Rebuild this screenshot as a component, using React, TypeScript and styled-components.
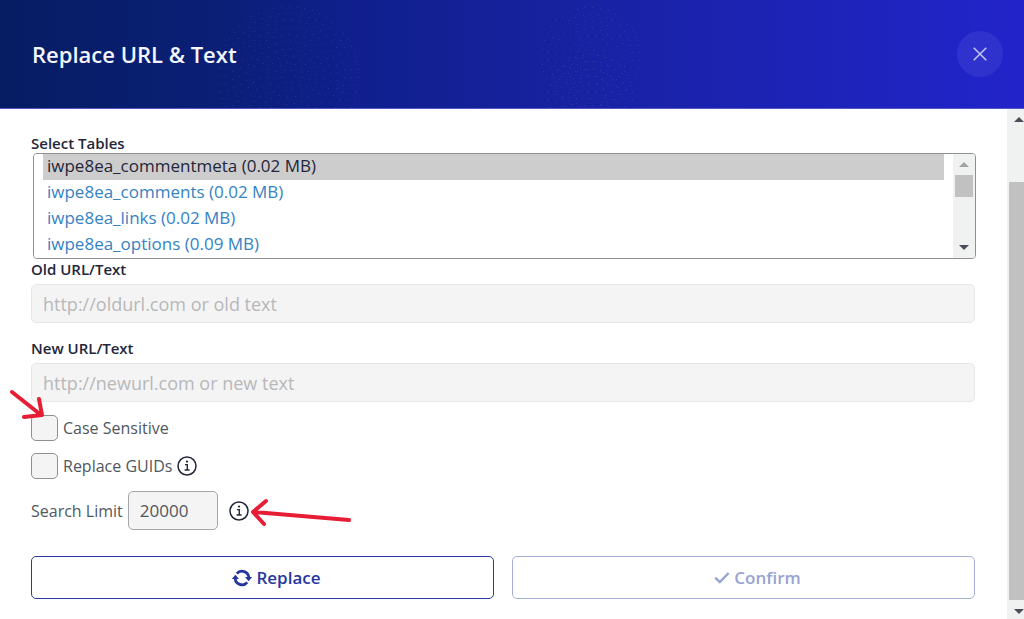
import React from "react";
import styled, { createGlobalStyle } from "styled-components";

const GlobalStyle = createGlobalStyle`
  *, *::before, *::after { box-sizing: border-box; }
  body { margin: 0; background: #fff; font-family: "Open Sans", "Noto Sans", sans-serif; color: #50575e; }
  button, input, select { font-family: inherit; }
`;

const Dialog = styled.main`
  display: flex;
  flex-direction: column;
  min-height: 100vh;
`;

const Header = styled.header`
  position: relative;
  display: flex;
  align-items: center;
  justify-content: space-between;
  height: 109px;
  padding: 0 21px 0 32px;
  border-bottom: 1px solid #5457c8;
  background: linear-gradient(90deg, #061d63 0%, #0a1f74 20%, #0f1f8b 33%, #1722a0 55%, #1c23b4 75%, #2224ca 100%);
`;

const Dots = styled.svg`
  position: absolute;
  inset: 0;
  width: 100%;
  height: 100%;
`;

const Title = styled.h1`
  position: relative;
  margin: 0;
  font-size: 22px;
  line-height: 32px;
  font-weight: 600;
  color: #f4f6ff;
`;

const CloseButton = styled.button`
  position: relative;
  display: grid;
  place-items: center;
  width: 46px;
  height: 46px;
  padding: 0;
  border: 0;
  border-radius: 50%;
  background: #3032cd;
`;

const Body = styled.div`
  display: flex;
  flex: 1;
`;

const Form = styled.form`
  flex: 1;
  min-width: 0;
  padding: 24px 32px 20px 31px;
`;

const Label = styled.label`
  display: block;
  font-size: 15px;
  line-height: 20px;
  font-weight: 600;
  color: #23263b;
`;

const ListBox = styled.div`
  display: flex;
  height: 106px;
  margin: 0 -1px 0 2px;
  border: 1px solid #8c8f94;
  border-radius: 4px;
  overflow: hidden;
`;

const TableSelect = styled.select`
  flex: 1;
  min-width: 0;
  height: 104px;
  padding: 0 9px;
  border: 0;
  outline: 0;
  background: #fff;
  overflow: hidden;
  font-size: 17px;
  scrollbar-width: none;

  option {
    min-height: 26px;
    padding: 0 4px;
    line-height: 26px;
    color: #3582c4;
  }
  option:checked { color: #23263b; background: #cdcdcd linear-gradient(#cdcdcd, #cdcdcd); }
`;

const Track = styled.div<{ $wide?: boolean }>`
  display: flex;
  flex-direction: column;
  align-items: ${(p) => (p.$wide ? "flex-end" : "center")};
  width: ${(p) => (p.$wide ? 17 : 22)}px;
  padding: ${(p) => (p.$wide ? "8px 0 5px 2px" : "8px 1px")};
  background: #f0f2f2;
`;

const Thumb = styled.div`
  width: 18px;
  height: 22px;
  margin-top: 8px;
  background: #c1c1c1;
`;

const LongThumb = styled.div`
  flex: 1;
  width: 100%;
  margin: 60px 0 9px;
  background: #c1c1c1;
`;

const Arrow = styled.span<{ $down?: boolean; $muted?: boolean }>`
  width: 10px;
  height: 5px;
  margin-top: ${(p) => (p.$down ? "auto" : 0)};
  background: ${(p) => (p.$muted ? "#a3a3a8" : "#4b4d57")};
  clip-path: ${(p) => (p.$down ? "polygon(0 0, 100% 0, 50% 100%)" : "polygon(50% 0, 100% 100%, 0 100%)")};
`;

const Field = styled.div`
  & + & { margin-top: 15px; }
`;

const TextInput = styled.input`
  display: block;
  width: 100%;
  height: 39px;
  margin-top: 5px;
  padding: 0 11px;
  border: 1px solid #e6e6e8;
  border-radius: 5px;
  background: #f4f4f4;
  font-size: 18px;
  color: #50575e;
  &::placeholder { color: #b7b8ba; opacity: 1; }
`;

const Options = styled.div`
  display: flex;
  flex-direction: column;
  gap: 12px;
  padding: 13px 0 26px;
`;

const OptionRow = styled.div`
  display: flex;
  align-items: center;
  gap: 5px;
  min-height: 26px;
  font-size: 16px;
  line-height: 24px;
`;

const Checkbox = styled.input`
  appearance: none;
  width: 27px;
  height: 26px;
  margin: 0;
  border: 1px solid #8c8f94;
  border-radius: 5px;
  background: #f4f4f4;
`;

const LimitInput = styled.input`
  width: 90px;
  height: 39px;
  margin-right: 6px;
  padding: 0 11px;
  border: 1px solid #a4a6aa;
  border-radius: 5px;
  background: #f4f4f4;
  font-size: 17px;
  color: #50575e;
`;

const Actions = styled.div`
  display: flex;
  gap: 18px;
`;

const ActionButton = styled.button`
  display: flex;
  flex: 1;
  align-items: center;
  justify-content: center;
  gap: 4px;
  height: 43px;
  padding: 0 0 0 28px;
  border: 1px solid #2a3b9f;
  border-radius: 5px;
  background: #fff;
  font-size: 17px;
  font-weight: 600;
  color: #24379f;
  &:disabled { border-color: #a5b0da; color: #97a3d3; }
`;

const Marks = styled.svg`
  position: absolute;
  left: 0;
  top: 380px;
  width: 370px;
  height: 160px;
  pointer-events: none;
`;

const tables = [
  "iwpe8ea_commentmeta (0.02 MB)",
  "iwpe8ea_comments (0.02 MB)",
  "iwpe8ea_links (0.02 MB)",
  "iwpe8ea_options (0.09 MB)",
];

function ring(cx: number, cy: number, from: number, to: number) {
  const dots: { x: number; y: number }[] = [];
  for (let r = from; r <= to; r += 7) {
    const count = Math.round(r * 0.8);
    for (let i = 0; i < count; i++) {
      const a = (i / count) * Math.PI * 2 + r * 0.13;
      dots.push({ x: Math.round(cx + Math.cos(a) * r), y: Math.round(cy + Math.sin(a) * r) });
    }
  }
  return dots;
}

const headerDots = [...ring(288, 76, 7, 70), ...ring(590, 56, 7, 49), ...ring(590, 96, 14, 42)];

function InfoIcon() {
  return (
    <svg width="20" height="20" viewBox="0 0 20 20" fill="none" stroke="#23263b" aria-hidden="true">
      <circle cx="10" cy="10" r="9" strokeWidth="1.5" />
      <path d="M8 8.6h2.3v5M7.6 14h5" strokeWidth="1.4" />
      <circle cx="10" cy="5.6" r="1.1" fill="#23263b" stroke="none" />
    </svg>
  );
}

export default function App() {
  return (
    <Dialog>
      <GlobalStyle />
      <Header>
        <Dots aria-hidden="true">
          {headerDots.map((d, i) => (
            <rect key={i} x={d.x} y={d.y} width="1" height="1" fill="#5a6cae" opacity="0.3" />
          ))}
        </Dots>
        <Title>Replace URL &amp; Text</Title>
        <CloseButton type="button" aria-label="Close">
          <svg width="14" height="14" viewBox="0 0 14 14" stroke="#c3c8f0" strokeWidth="1.5">
            <path d="M.7.7l12.6 12.6M13.3.7L.7 13.3" />
          </svg>
        </CloseButton>
      </Header>
      <Body>
        <Form>
          <Label htmlFor="tables">Select Tables</Label>
          <ListBox>
            <TableSelect id="tables" multiple size={4} defaultValue={[tables[0]]}>
              {tables.map((t) => (
                <option key={t}>{t}</option>
              ))}
            </TableSelect>
            <Track>
              <Arrow $muted />
              <Thumb />
              <Arrow $down />
            </Track>
          </ListBox>
          <Field>
            <Label htmlFor="old">Old URL/Text</Label>
            <TextInput id="old" placeholder="http://oldurl.com or old text" />
          </Field>
          <Field>
            <Label htmlFor="new">New URL/Text</Label>
            <TextInput id="new" placeholder="http://newurl.com or new text" />
          </Field>
          <Options>
            <OptionRow>
              <Checkbox type="checkbox" id="case" />
              <label htmlFor="case">Case Sensitive</label>
            </OptionRow>
            <OptionRow>
              <Checkbox type="checkbox" id="guids" />
              <label htmlFor="guids">Replace GUIDs</label>
              <InfoIcon />
            </OptionRow>
            <OptionRow>
              <label htmlFor="limit">Search Limit</label>
              <LimitInput id="limit" defaultValue="20000" />
              <InfoIcon />
            </OptionRow>
          </Options>
          <Actions>
            <ActionButton type="button">
              <svg width="20" height="20" viewBox="0 0 20 20" fill="none" stroke="currentColor" strokeWidth="2.8" aria-hidden="true">
                <path d="M4.8 5.6A6.8 6.8 0 0 1 16.8 10M15.2 14.4A6.8 6.8 0 0 1 3.2 10" />
                <path d="M13 9h7.2l-3.6 4.2zM7 11H-.2l3.6-4.2z" fill="currentColor" stroke="none" />
              </svg>
              Replace
            </ActionButton>
            <ActionButton type="button" disabled>
              <svg width="16" height="14" viewBox="0 0 16 14" fill="none" stroke="currentColor" strokeWidth="2.4" aria-hidden="true">
                <path d="M1.2 6.6l4.6 4.4L14.6 2" />
              </svg>
              Confirm
            </ActionButton>
          </Actions>
        </Form>
        <Track $wide>
          <Arrow />
          <LongThumb />
          <Arrow $down />
        </Track>
      </Body>
      <Marks viewBox="0 380 370 160" fill="none" stroke="#e71d36" strokeWidth="4" strokeLinecap="round" strokeLinejoin="round" aria-hidden="true">
        <path d="M12 392L41 415M39 399L42 415L24 417M349 520L254 512M266 501L253 512L264 524" />
      </Marks>
    </Dialog>
  );
}
